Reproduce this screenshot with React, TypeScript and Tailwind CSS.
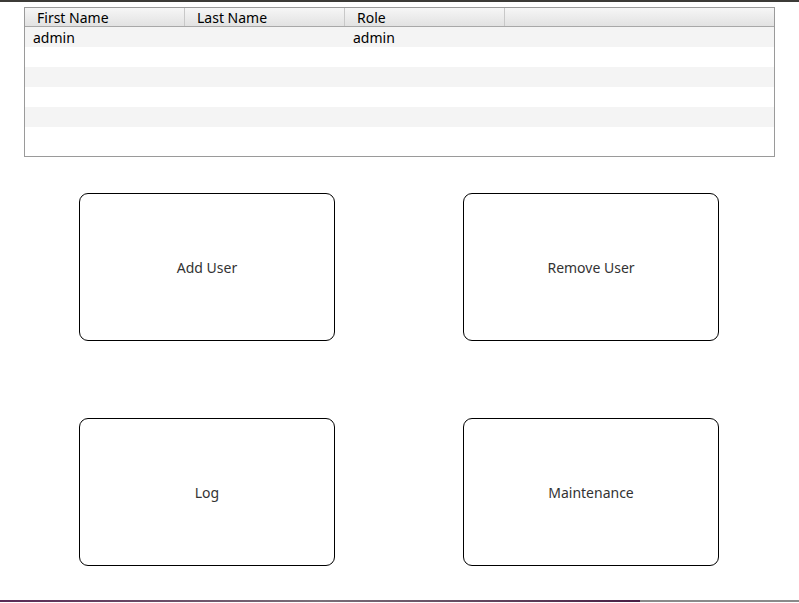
import React from "react";

const columns = ["First Name", "Last Name", "Role", ""];

const users = [{ first: "admin", last: "", role: "admin" }];

const font = { fontFamily: '"Noto Sans", "Open Sans", sans-serif' };

// pad the table out so stripes fill the viewport like the original widget
const rows = Array.from({ length: 6 }, (_, i) => users[i] ?? null);

const ActionButton = ({ label }: { label: string }) => (
  <button className="w-[256px] h-[148px] rounded-[9px] border border-black bg-white text-[14px] text-[#333]">
    {label}
  </button>
);

export default function App() {
  return (
    <div className="w-[799px] h-[603px] bg-white flex flex-col overflow-hidden" style={font}>
      <div className="h-[2px] bg-[#3c3b37]" />

      {/* user table */}
      <div className="mt-[5px] mx-[24px] h-[150px] border border-[#9a9a9a] bg-white">
        <div className="flex h-[19px] border-b border-[#a8a8a8] bg-gradient-to-b from-[#f6f6f6] to-[#e2e2e2] text-[14px] leading-[19px] text-black">
          {columns.map((c, i) => (
            <div
              key={i}
              className={
                i < 3
                  ? "w-[160px] pl-[12px] border-r border-[#c8c8c8]"
                  : "flex-1 pl-[12px]"
              }
            >
              {c}
            </div>
          ))}
        </div>
        {rows.map((u, i) => (
          <div
            key={i}
            className={
              "flex h-[20px] pt-[1px] text-[14px] leading-[20px] text-black " +
              (i % 2 === 0 ? "bg-[#f4f4f4]" : "bg-white")
            }
          >
            <div className="w-[160px] pl-[8px]">{u?.first}</div>
            <div className="w-[160px] pl-[8px]">{u?.last}</div>
            <div className="w-[160px] pl-[8px]">{u?.role}</div>
          </div>
        ))}
      </div>

      <div className="mt-[36px] grid grid-cols-[256px_256px] gap-x-[128px] gap-y-[77px] pl-[79px]">
        <ActionButton label="Add User" />
        <ActionButton label="Remove User" />
        <ActionButton label="Log" />
        <ActionButton label="Maintenance" />
      </div>

      <div className="mt-auto mb-[1px] h-[2px] flex">
        <div className="w-[640px] bg-gradient-to-r from-[#5a2a55] via-[#7a6f78] to-[#4a1f45]" />
        <div className="flex-1 bg-[#8a8a8a]" />
      </div>
    </div>
  );
}
